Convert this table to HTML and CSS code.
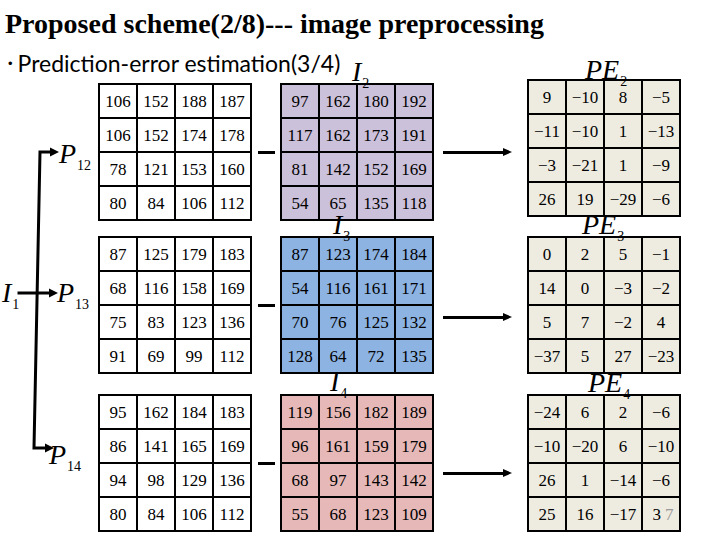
FILE: index.html
```html
<!DOCTYPE html>
<html>
<head>
<meta charset="utf-8">
<link rel="stylesheet" href="styles.css">
</head>
<body>
<div class="slide">
  <h1 class="title">Proposed scheme(2/8)--- image preprocessing</h1>
  <p class="bullet"><span class="dot">•</span>Prediction-error estimation(3/4)</p>

  <div class="diagram">
    <svg class="connectors" width="98" height="420" viewBox="0 0 98 420">
      <g stroke="#000" stroke-width="3" fill="none" stroke-linecap="square">
        <polyline points="52,69 40,69 34,365 46,365"/>
        <line x1="19" y1="210" x2="51" y2="210"/>
      </g>
      <g fill="#000">
        <polygon points="50,64.5 59,69 50,73.5"/>
        <polygon points="49,205.5 58,210 49,214.5"/>
        <polygon points="45,360.5 54,365 45,369.5"/>
      </g>
    </svg>

    <!-- row 1 -->
    <div class="side"><span class="var p12">P<sub>12</sub></span></div>
    <div class="matrix white">
      <span>106</span><span>152</span><span>188</span><span>187</span>
      <span>106</span><span>152</span><span>174</span><span>178</span>
      <span>78</span><span>121</span><span>153</span><span>160</span>
      <span>80</span><span>84</span><span>106</span><span>112</span>
    </div>
    <div class="op"><i class="minus"></i></div>
    <div class="matrix purple">
      <span class="var mlabel l-i2">I<sub>2</sub></span>
      <span>97</span><span>162</span><span>180</span><span>192</span>
      <span>117</span><span>162</span><span>173</span><span>191</span>
      <span>81</span><span>142</span><span>152</span><span>169</span>
      <span>54</span><span>65</span><span>135</span><span>118</span>
    </div>
    <div class="op"><i class="arrow r1"></i></div>
    <div class="matrix beige pe2">
      <span class="var mlabel l-pe2">PE<sub>2</sub></span>
      <span>9</span><span>−10</span><span>8</span><span>−5</span>
      <span>−11</span><span>−10</span><span>1</span><span>−13</span>
      <span>−3</span><span>−21</span><span>1</span><span>−9</span>
      <span>26</span><span>19</span><span>−29</span><span>−6</span>
    </div>

    <!-- row 2 -->
    <div class="side">
      <span class="var i1">I<sub>1</sub></span>
      <span class="var p13">P<sub>13</sub></span>
    </div>
    <div class="matrix white">
      <span>87</span><span>125</span><span>179</span><span>183</span>
      <span>68</span><span>116</span><span>158</span><span>169</span>
      <span>75</span><span>83</span><span>123</span><span>136</span>
      <span>91</span><span>69</span><span>99</span><span>112</span>
    </div>
    <div class="op"><i class="minus"></i></div>
    <div class="matrix blue">
      <span class="var mlabel l-i3">I<sub>3</sub></span>
      <span>87</span><span>123</span><span>174</span><span>184</span>
      <span>54</span><span>116</span><span>161</span><span>171</span>
      <span>70</span><span>76</span><span>125</span><span>132</span>
      <span>128</span><span>64</span><span>72</span><span>135</span>
    </div>
    <div class="op"><i class="arrow r2"></i></div>
    <div class="matrix beige">
      <span class="var mlabel l-pe3">PE<sub>3</sub></span>
      <span>0</span><span>2</span><span>5</span><span>−1</span>
      <span>14</span><span>0</span><span>−3</span><span>−2</span>
      <span>5</span><span>7</span><span>−2</span><span>4</span>
      <span>−37</span><span>5</span><span>27</span><span>−23</span>
    </div>

    <!-- row 3 -->
    <div class="side"><span class="var p14">P<sub>14</sub></span></div>
    <div class="matrix white">
      <span>95</span><span>162</span><span>184</span><span>183</span>
      <span>86</span><span>141</span><span>165</span><span>169</span>
      <span>94</span><span>98</span><span>129</span><span>136</span>
      <span>80</span><span>84</span><span>106</span><span>112</span>
    </div>
    <div class="op"><i class="minus"></i></div>
    <div class="matrix pink">
      <span class="var mlabel l-i4">I<sub>4</sub></span>
      <span>119</span><span>156</span><span>182</span><span>189</span>
      <span>96</span><span>161</span><span>159</span><span>179</span>
      <span>68</span><span>97</span><span>143</span><span>142</span>
      <span>55</span><span>68</span><span>123</span><span>109</span>
    </div>
    <div class="op"><i class="arrow r3"></i></div>
    <div class="matrix beige">
      <span class="var mlabel l-pe4">PE<sub>4</sub></span>
      <span>−24</span><span>6</span><span>2</span><span>−6</span>
      <span>−10</span><span>−20</span><span>6</span><span>−10</span>
      <span>26</span><span>1</span><span>−14</span><span>−6</span>
      <span>25</span><span>16</span><span>−17</span><span class="last">3<em class="pg">7</em></span>
    </div>
  </div>
</div>
</body>
</html>
```

FILE: styles.css
```css
html, body {
  margin: 0;
  padding: 0;
  background: #fff;
}

.slide {
  width: 720px;
  height: 540px;
  overflow: hidden;
  padding-top: 10px;
  box-sizing: border-box;
  color: #000;
}

.title {
  margin: 0;
  padding-left: 5px;
  font-family: "Liberation Serif", serif;
  font-weight: 700;
  font-size: 28px;
  line-height: 28px;
  white-space: nowrap;
}

.bullet {
  margin: 12px 0 0;
  padding-left: 8px;
  font-family: Lato, "Noto Sans", sans-serif;
  font-size: 23px;
  line-height: 26px;
  white-space: nowrap;
}

.dot {
  font-family: "Liberation Sans", sans-serif;
  font-size: 13px;
  margin-right: 5px;
  vertical-align: 4px;
}

.diagram {
  position: relative;
  margin-top: 6px;
  display: grid;
  grid-template-columns: 98px 154px 28px 154px 93px 153px;
  grid-template-rows: 153px 158px 138px;
  align-items: start;
}

.connectors {
  position: absolute;
  left: 0;
  top: 0;
}

.side {
  position: relative;
  height: 138px;
}

.var {
  font-family: "Liberation Serif", serif;
  font-style: italic;
  font-size: 28px;
  line-height: 28px;
  white-space: nowrap;
}

.var sub {
  font-style: normal;
  font-size: 14px;
  vertical-align: baseline;
  position: relative;
  top: 7px;
  margin-left: 1px;
}

.side .var {
  position: absolute;
}

.p12 { left: 59px; top: 57px; }
.i1 { left: 2px; top: 43px; }
.p13 { left: 57px; top: 43px; }
.p14 { left: 49px; top: 47px; }

.matrix {
  position: relative;
  display: grid;
  grid-template-columns: repeat(4, 36px);
  grid-template-rows: repeat(4, 32px);
  gap: 2px;
  padding: 2px;
  background: #000;
  width: 154px;
  height: 138px;
  box-sizing: border-box;
}

.matrix > span:not(.mlabel) {
  display: flex;
  align-items: center;
  justify-content: center;
  font-family: "Liberation Serif", serif;
  font-size: 17px;
  padding-top: 1px;
}

.white > span { background: #fff; }
.purple > span:not(.mlabel) { background: #ccc1da; }
.blue > span:not(.mlabel) { background: #8db3e2; }
.pink > span:not(.mlabel) { background: #e6b9b8; }
.beige > span:not(.mlabel) { background: #eeece1; }

.pe2 { margin-top: -4px; }

.mlabel {
  position: absolute;
  z-index: 1;
}

.l-i2 { left: 72px; top: -25px; }
.l-i3 { left: 53px; top: -25px; }
.l-i4 { left: 50px; top: -26px; }
.l-pe2 { left: 58px; top: -23px; }
.l-pe3 { left: 55px; top: -25px; }
.l-pe4 { left: 61px; top: -25px; }

.last {
  padding-left: 4px;
}

.pg {
  font-style: normal;
  color: #9a9a9a;
  margin-left: 4px;
}

.op {
  display: flex;
  flex-direction: column;
  height: 138px;
}

.minus {
  display: block;
  width: 17px;
  height: 3px;
  background: #000;
  margin: auto 0 auto 6px;
}

.arrow {
  display: block;
  position: relative;
  width: 60px;
  height: 3px;
  background: #000;
  margin-left: 9px;
}

.arrow::after {
  content: "";
  position: absolute;
  left: 60px;
  top: -3px;
  border-left: 9px solid #000;
  border-top: 4.5px solid transparent;
  border-bottom: 4.5px solid transparent;
}

.r1 { margin-top: 68px; }
.r2 { margin-top: 80px; }
.r3 { margin-top: 78px; }
```
